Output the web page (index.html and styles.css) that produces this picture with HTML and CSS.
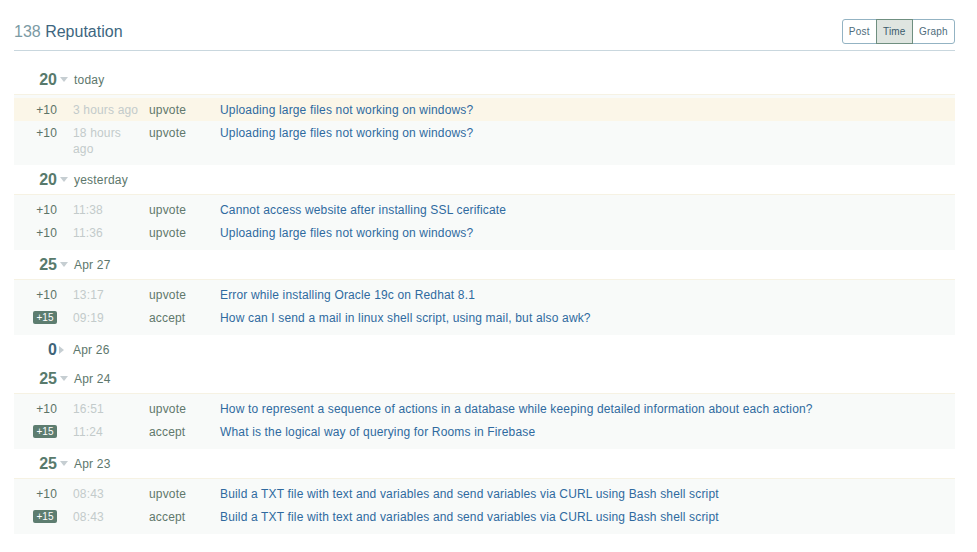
FILE: index.html
```html
<!DOCTYPE html>
<html>
<head>
<meta charset="utf-8">
<link rel="stylesheet" href="styles.css">
</head>
<body>
<div class="page">
  <div class="top">
    <h1 class="title"><span class="total">138</span> Reputation</h1>
    <div class="tabs">
      <span class="tab">Post</span>
      <span class="tab active">Time</span>
      <span class="tab">Graph</span>
    </div>
  </div>

  <div class="day first">
    <div class="day-head"><span class="sum">20</span><span class="tri down"></span><span class="date">today</span></div>
    <div class="day-body">
      <div class="row hl"><span class="pts">+10</span><span class="time">3 hours ago</span><span class="act">upvote</span><a class="post">Uploading large files not working on windows?</a></div>
      <div class="row"><span class="pts">+10</span><span class="time">18 hours ago</span><span class="act">upvote</span><a class="post">Uploading large files not working on windows?</a></div>
    </div>
  </div>

  <div class="day">
    <div class="day-head"><span class="sum">20</span><span class="tri down"></span><span class="date">yesterday</span></div>
    <div class="day-body">
      <div class="row"><span class="pts">+10</span><span class="time">11:38</span><span class="act">upvote</span><a class="post">Cannot access website after installing SSL cerificate</a></div>
      <div class="row"><span class="pts">+10</span><span class="time">11:36</span><span class="act">upvote</span><a class="post">Uploading large files not working on windows?</a></div>
    </div>
  </div>

  <div class="day">
    <div class="day-head"><span class="sum">25</span><span class="tri down"></span><span class="date">Apr 27</span></div>
    <div class="day-body">
      <div class="row"><span class="pts">+10</span><span class="time">13:17</span><span class="act">upvote</span><a class="post">Error while installing Oracle 19c on Redhat 8.1</a></div>
      <div class="row"><span class="pts"><span class="badge">+15</span></span><span class="time">09:19</span><span class="act">accept</span><a class="post">How can I send a mail in linux shell script, using mail, but also awk?</a></div>
    </div>
  </div>

  <div class="day">
    <div class="day-head"><span class="sum zero">0</span><span class="tri right"></span><span class="date">Apr 26</span></div>
  </div>

  <div class="day">
    <div class="day-head"><span class="sum">25</span><span class="tri down"></span><span class="date">Apr 24</span></div>
    <div class="day-body">
      <div class="row"><span class="pts">+10</span><span class="time">16:51</span><span class="act">upvote</span><a class="post">How to represent a sequence of actions in a database while keeping detailed information about each action?</a></div>
      <div class="row"><span class="pts"><span class="badge">+15</span></span><span class="time">11:24</span><span class="act">accept</span><a class="post">What is the logical way of querying for Rooms in Firebase</a></div>
    </div>
  </div>

  <div class="day">
    <div class="day-head"><span class="sum">25</span><span class="tri down"></span><span class="date">Apr 23</span></div>
    <div class="day-body">
      <div class="row"><span class="pts">+10</span><span class="time">08:43</span><span class="act">upvote</span><a class="post">Build a TXT file with text and variables and send variables via CURL using Bash shell script</a></div>
      <div class="row"><span class="pts"><span class="badge">+15</span></span><span class="time">08:43</span><span class="act">accept</span><a class="post">Build a TXT file with text and variables and send variables via CURL using Bash shell script</a></div>
    </div>
  </div>
</div>
</body>
</html>
```

FILE: styles.css
```css
* { box-sizing: border-box; }
html, body { margin: 0; padding: 0; background: #fff; }
body {
  font-family: "Liberation Sans", Arial, sans-serif;
  font-size: 12px;
  color: #5b7367;
}
.page {
  padding: 0 22px 0 14px;
}
.top {
  height: 51px;
  padding-top: 12px;
  border-bottom: 1px solid #c9d7de;
  display: flex;
  align-items: center;
  justify-content: space-between;
}
.title {
  margin: 2px 0 0;
  font-size: 16px;
  font-weight: normal;
  color: #3d6680;
}
.total { color: #7b9aa4; }
.tabs {
  display: flex;
  height: 25px;
  border: 1px solid #93b3c3;
  border-radius: 3px;
}
.tab {
  display: flex;
  align-items: center;
  padding: 0 6.3px;
  font-size: 10px;
  letter-spacing: 0.2px;
  color: #4e6c7b;
}
.tab.active {
  background: #dfe5e0;
  border: 1px solid #6f8f80;
  margin: -1px 0;
  padding: 0 6px;
  color: #3a5b6b;
}
.day.first { margin-top: 14px; }
.day.first .day-body { padding-bottom: 5px; }
.day-head {
  height: 29px;
  display: flex;
  align-items: center;
}
.sum {
  width: 43px;
  text-align: right;
  font-size: 16px;
  font-weight: bold;
  color: #587a6c;
}
.sum.zero { color: #3f6479; }
.tri { display: inline-block; width: 0; height: 0; }
.tri.down {
  margin-left: 3px;
  border-left: 4.5px solid transparent;
  border-right: 4.5px solid transparent;
  border-top: 5px solid #c6ced2;
}
.tri.right {
  margin-left: 2px;
  margin-right: 3px;
  border-top: 4px solid transparent;
  border-bottom: 4px solid transparent;
  border-left: 5px solid #c6ced2;
}
.date {
  margin-left: 6px;
  font-size: 12px;
  letter-spacing: 0.2px;
  color: #5d776c;
}
.day-body {
  background: #f8faf9;
  border-top: 1px solid #f6f2e3;
  padding: 3px 0 6px;
}
.row {
  display: grid;
  grid-template-columns: 59px 76px 71px 1fr;
  line-height: 16px;
  padding: 3.5px 0;
  letter-spacing: 0.16px;
}
.row.hl { background: #fbf6e8; }
.pts {
  text-align: right;
  padding-right: 16px;
  color: #5c7367;
}
.badge {
  display: inline-block;
  width: 24px;
  height: 13px;
  line-height: 13px;
  text-align: center;
  background: #5d7d70;
  color: #fff;
  font-size: 10px;
  letter-spacing: 0;
  border-radius: 2px;
  vertical-align: middle;
  position: relative;
  top: -1px;
}
.time {
  padding-right: 8px;
  color: #c3cbcb;
}
.act { color: #61786c; }
.post {
  color: #2f6a9f;
  text-decoration: none;
}
```
